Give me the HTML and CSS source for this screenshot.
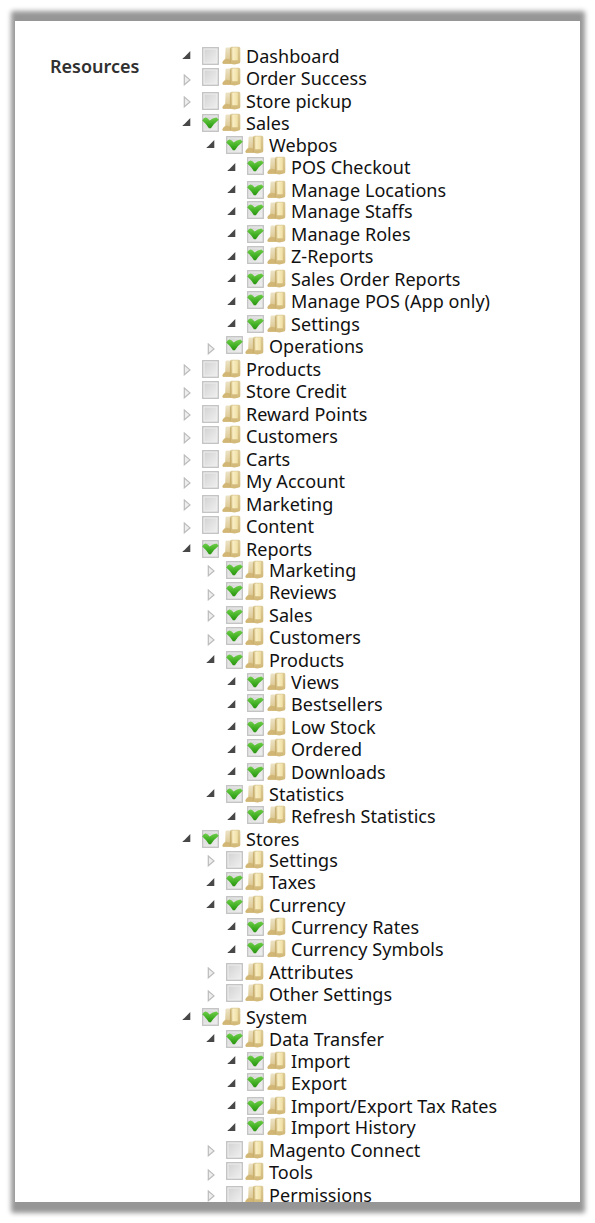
FILE: index.html
```html
<!DOCTYPE html>
<html lang="en">
<head>
<meta charset="utf-8">
<title>Role Resources</title>
<link rel="stylesheet" href="styles.css">
</head>
<body>
<svg class="defs" aria-hidden="true">
  <defs>
    <linearGradient id="box" x1="0" y1="0" x2="1" y2="1"><stop offset="0" stop-color="#d4d4d4"/><stop offset="1" stop-color="#eee"/></linearGradient>
    <linearGradient id="green" x1="0" y1="0" x2="0" y2="1"><stop offset="0" stop-color="#6fce4a"/><stop offset=".6" stop-color="#3fae22"/><stop offset="1" stop-color="#2b9212"/></linearGradient>
    <linearGradient id="front" x1="0" y1="0" x2="1" y2="0"><stop offset="0" stop-color="#faf0c8"/><stop offset="1" stop-color="#f0dfa4"/></linearGradient>
    <linearGradient id="side" x1="0" y1="0" x2="0" y2="1"><stop offset="0" stop-color="#dccb98"/><stop offset="1" stop-color="#d2b877"/></linearGradient>
    <linearGradient id="back" x1="0" y1="0" x2="0" y2="1"><stop offset="0" stop-color="#ece3c6"/><stop offset="1" stop-color="#d9c184"/></linearGradient>
  </defs>
  <symbol id="off" viewBox="0 0 17 18"><rect x=".7" y=".7" width="15.6" height="16.6" fill="#eee" stroke="#c2c2c2" stroke-width="1.3"/><rect x="2.500" y="2.500" width="12" height="13" fill="url(#box)"/></symbol>
  <symbol id="on" viewBox="0 0 17 18"><rect x=".7" y=".7" width="15.6" height="16.6" fill="#e9e9e9" stroke="#c2c2c2" stroke-width="1.3"/><rect x="2.500" y="2.500" width="12" height="13" fill="url(#box)"/><path d="M.2 6.600Q1.500 3.600 3.700 3.600Q5.800 4 7.600 6.600Q10.500 4 14.500 3.500L16.800 5.800Q12 9.300 8.900 14.300H6.900Q4.300 9.800.2 6.600Z" fill="url(#green)"/></symbol>
  <symbol id="folder" viewBox="0 0 19 19"><path d="M3.500 2.800Q3.500 1.600 4.800 1.600H9.500V17.800H1.200Q.2 17.600.4 16L3.200 12.500Z" fill="url(#back)"/><path d="M1 15 4.500 12.800 8 13.500V17.800H1.200Q.3 17.500 1 15Z" fill="#d1b675"/><path d="M8 2.400Q8 1 9.500.7H16.800Q18.300.7 18.300 2.200V15.800Q18.300 17.200 17 17.500L12.500 18.600 8 17.800Z" fill="url(#side)"/><path d="M8.400 2.500V17" stroke="#c4aa68" stroke-width=".8"/><path d="M10.300 2.500Q10.300 1.500 11.300 1.500H15.800V14.200H10.300Z" fill="url(#front)"/></symbol>
  <symbol id="open" viewBox="0 0 9 10"><path d="M8.300 1V9H.3Q1 7.800 2.500 7Z" fill="#484848"/></symbol>
  <symbol id="closed" viewBox="0 0 9 12"><path d="M1.300 1V10.800L7 5.900Z" fill="#eee" stroke="#bcbcbc" stroke-width="1.200"/></symbol>
</svg>
<main class="panel">
  <div class="content">
    <h1 class="label">Resources</h1>
    <div class="tree" id="tree"></div>
  </div>
</main>
<script src="tree.js"></script>
</body>
</html>
```

FILE: styles.css
```css
body {
  box-sizing: border-box;
  height: 1223px;
  margin: 0;
  padding: 21px 15px;
  background: #fff;
  font-family: "Noto Sans", "Open Sans", sans-serif;
}
.defs { position: absolute; width: 0; height: 0; }
.panel {
  position: relative;
  width: 565px;
  height: 1181px;
}
/* soft grey frame behind the sheet */
.panel::before {
  content: "";
  position: absolute;
  inset: -10.5px -5px -10.5px -4.500px;
  border-radius: 2px;
  background: #969696;
  filter: blur(2.400px);
}
.content {
  position: relative;
  box-sizing: border-box;
  display: flex;
  height: 100%;
  padding-top: 24px;
  background: #fff;
}
.label {
  width: 132px;
  margin: 7px 0 0;
  padding-left: 35px;
  box-sizing: border-box;
  font-size: 18px;
  line-height: 28px;
  font-weight: 600;
  color: #303030;
}
.tree {
  height: 1157px;
  flex: 1;
  overflow: hidden;
  padding-left: 35px;
}
.row {
  display: flex;
  align-items: flex-start;
  font-size: 18px;
  line-height: 22px;
  letter-spacing: .05px;
  color: #111;
  white-space: nowrap;
}
.short { height: 21.880px; }
.tall { height: 23px; }
.level-1 { padding-left: 24px; }
.level-2 { padding-left: 45px; }
.arrow { width: 9px; height: 10px; margin-top: 5px; flex: none; }
.arrow.closed { height: 12px; margin: 6px 0 0 .5px; }
.check { width: 17px; height: 18px; margin: 2px 0 0 10.500px; flex: none; }
.folder { width: 19px; height: 19px; margin: 1px 0 0 3px; flex: none; }
.arrow.closed + .check { margin-left: 10px; }
.tall .arrow { margin-top: 6px; }
.tall .arrow.closed { margin-top: 7.500px; }
.tall .check { margin-top: 1px; }
.tall .folder { margin-top: .5px; }
.text { margin-left: 5.500px; }
.level-1 .folder { margin-left: 2px; }
```

FILE: tree.js
```js
// Each entry: depth, state (o = open, c = collapsed), checked, row size, name.
const rows = `
0 o 0 short Dashboard
0 c 0 tall Order Success
0 c 0 short Store pickup
0 o 1 short Sales
1 o 1 short Webpos
2 o 1 tall POS Checkout
2 o 1 short Manage Locations
2 o 1 tall Manage Staffs
2 o 1 short Manage Roles
2 o 1 tall Z-Reports
2 o 1 short Sales Order Reports
2 o 1 tall Manage POS (App only)
2 o 1 short Settings
1 c 1 tall Operations
0 c 0 short Products
0 c 0 tall Store Credit
0 c 0 short Reward Points
0 c 0 tall Customers
0 c 0 short Carts
0 c 0 tall My Account
0 c 0 short Marketing
0 c 0 tall Content
0 o 1 short Reports
1 c 1 short Marketing
1 c 1 tall Reviews
1 c 1 short Sales
1 c 1 tall Customers
1 o 1 short Products
2 o 1 short Views
2 o 1 tall Bestsellers
2 o 1 short Low Stock
2 o 1 tall Ordered
2 o 1 short Downloads
1 o 1 short Statistics
2 o 1 tall Refresh Statistics
0 o 1 short Stores
1 c 0 short Settings
1 o 1 tall Taxes
1 o 1 short Currency
2 o 1 short Currency Rates
2 o 1 tall Currency Symbols
1 c 0 short Attributes
1 c 0 tall Other Settings
0 o 1 short System
1 o 1 short Data Transfer
2 o 1 short Import
2 o 1 tall Export
2 o 1 short Import/Export Tax Rates
2 o 1 tall Import History
1 c 0 short Magento Connect
1 c 0 tall Tools
1 c 0 short Permissions`.trim().split("\n");

document.getElementById("tree").innerHTML = rows.map(line => {
  const [, depth, state, checked, size, name] = line.match(/^(\d) (\w) (\d) (\w+) (.+)$/);
  const arrow = state === "o" ? "open" : "closed";
  return `<div class="row ${size} level-${depth}">
    <svg class="arrow ${arrow}"><use href="#${arrow}"/></svg>
    <svg class="check"><use href="#${checked === "1" ? "on" : "off"}"/></svg>
    <svg class="folder"><use href="#folder"/></svg>
    <span class="text">${name}</span></div>`;
}).join("");
```
